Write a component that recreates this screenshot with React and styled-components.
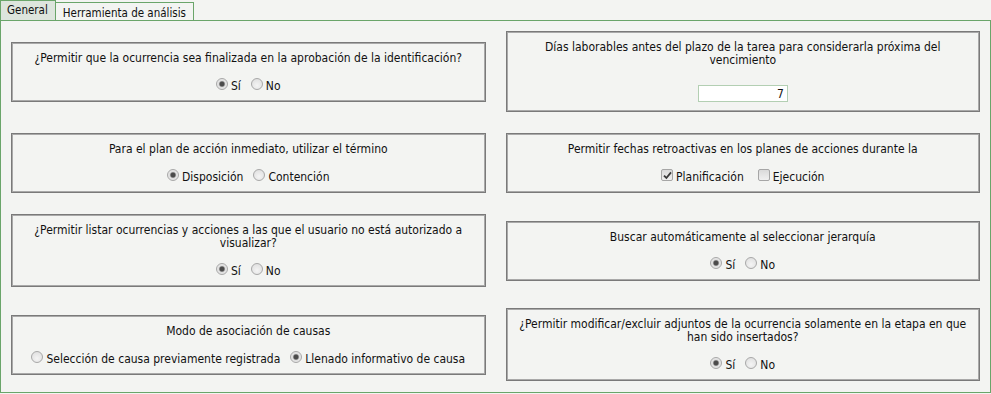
import styled, { createGlobalStyle } from 'styled-components'

const GlobalStyle = createGlobalStyle`
  body {
    margin: 0;
    background: #f3f4f2;
    font-family: 'DejaVu Sans Condensed', 'DejaVu Sans', sans-serif;
    font-size: 12px;
    color: #111;
  }
`

const TabBar = styled.div`
  display: flex;
  align-items: flex-end;
  height: 20px;
  font-size: 11.5px;
`

const Tab = styled.div`
  box-sizing: border-box;
  height: ${(props) => (props.$active ? 20 : 18)}px;
  padding: ${(props) => (props.$active ? '2px 7px 0 6px' : '3px 7px 0 7px')};
  margin-left: ${(props) => (props.$active ? 0 : -1)}px;
  line-height: 14px;
  border: 1px solid #6aa56a;
  border-bottom: none;
  background: ${(props) => (props.$active ? '#dde5dd' : '#f3f4f2')};
  white-space: nowrap;
`

const Panel = styled.div`
  display: grid;
  grid-template-columns: 1fr 1fr;
  column-gap: 20px;
  row-gap: 21px;
  align-items: center;
  padding: 10px 10px 11px;
  border: 1px solid #6aa56a;
`

const Box = styled.div`
  border: 1px solid #7a7a7a;
  box-shadow: inset 0 0 0 1px #a9a9a9;
  padding: 9px 11px 7px;
  text-align: center;
`

const Title = styled.div`
  line-height: 13px;
`

const Options = styled.div`
  display: flex;
  justify-content: center;
  align-items: center;
  gap: ${(props) => props.$gap || 10}px;
  height: 16px;
  margin-top: 13px;
`

const Option = styled.label`
  display: inline-flex;
  align-items: center;
  gap: 3px;
  white-space: nowrap;
`

const Radio = styled.span`
  box-sizing: border-box;
  width: 12px;
  height: 12px;
  margin-bottom: 4px;
  border-radius: 50%;
  border: 1px solid #a8a8a8;
  background: ${(props) =>
    props.$checked
      ? 'radial-gradient(circle, #4b4b4b 0 2px, #8c8c8c 2.6px, #dedede 3.4px, #f2f2f2 100%)'
      : 'radial-gradient(circle at 50% 65%, #f4f4f4 0, #dcdcdc 100%)'};
`

const Check = styled.span`
  box-sizing: border-box;
  display: inline-flex;
  align-items: center;
  justify-content: center;
  width: 12px;
  height: 12px;
  margin-bottom: 4px;
  border: 1px solid #a6a6a6;
  border-radius: 2px;
  background: linear-gradient(#dadada, #f0f0f0);
`

const NumberField = styled.input`
  box-sizing: border-box;
  display: block;
  width: 90px;
  height: 17px;
  margin: 18px auto 2px;
  padding: 0 3px;
  border: 1px solid #b3cfb3;
  background: #fff;
  text-align: right;
  font: 12px 'DejaVu Sans Condensed', 'DejaVu Sans', sans-serif;
  color: #111;
  outline: none;
`

function RadioOption({ checked, children }) {
  return (
    <Option>
      <Radio $checked={checked} />
      {children}
    </Option>
  )
}

function CheckOption({ checked, children }) {
  return (
    <Option>
      <Check>
        {checked && (
          <svg width="9" height="9" viewBox="0 0 9 9">
            <path d="M1 4.6 L3.4 7 L8 1.4" fill="none" stroke="#3a3a3a" strokeWidth="1.8" />
          </svg>
        )}
      </Check>
      {children}
    </Option>
  )
}

function YesNo({ value }) {
  return (
    <Options>
      <RadioOption checked={value}>Sí</RadioOption>
      <RadioOption checked={!value}>No</RadioOption>
    </Options>
  )
}

export default function App() {
  return (
    <>
      <GlobalStyle />
      <TabBar>
        <Tab $active>General</Tab>
        <Tab>Herramienta de análisis</Tab>
      </TabBar>
      <Panel>
        <Box>
          <Title>¿Permitir que la ocurrencia sea finalizada en la aprobación de la identificación?</Title>
          <YesNo value />
        </Box>
        <Box>
          <Title>Días laborables antes del plazo de la tarea para considerarla próxima del vencimiento</Title>
          <NumberField type="text" defaultValue="7" readOnly />
        </Box>

        <Box>
          <Title>Para el plan de acción inmediato, utilizar el término</Title>
          <Options>
            <RadioOption checked>Disposición</RadioOption>
            <RadioOption>Contención</RadioOption>
          </Options>
        </Box>
        <Box>
          <Title>Permitir fechas retroactivas en los planes de acciones durante la</Title>
          <Options $gap={14}>
            <CheckOption checked>Planificación</CheckOption>
            <CheckOption>Ejecución</CheckOption>
          </Options>
        </Box>

        <Box>
          <Title>¿Permitir listar ocurrencias y acciones a las que el usuario no está autorizado a visualizar?</Title>
          <YesNo value />
        </Box>
        <Box>
          <Title>Buscar automáticamente al seleccionar jerarquía</Title>
          <YesNo value />
        </Box>

        <Box>
          <Title>Modo de asociación de causas</Title>
          <Options>
            <RadioOption>Selección de causa previamente registrada</RadioOption>
            <RadioOption checked>Llenado informativo de causa</RadioOption>
          </Options>
        </Box>
        <Box>
          <Title>¿Permitir modificar/excluir adjuntos de la ocurrencia solamente en la etapa en que han sido insertados?</Title>
          <YesNo value />
        </Box>
      </Panel>
    </>
  )
}
